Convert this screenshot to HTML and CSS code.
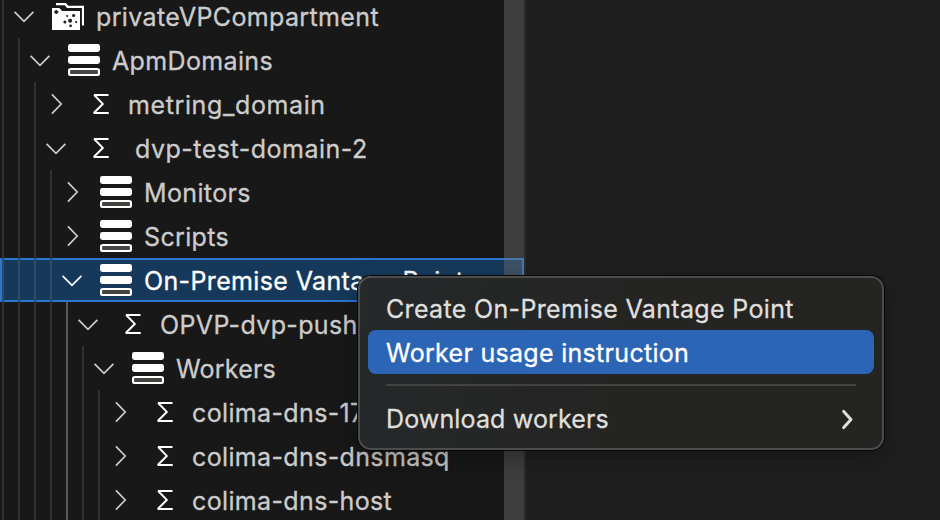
FILE: index.html
```html
<!DOCTYPE html>
<html lang="en">
<head>
<meta charset="utf-8">
<title>Explorer</title>
<link rel="stylesheet" href="styles.css">
</head>
<body>
<svg class="defs" width="0" height="0" aria-hidden="true">
  <symbol id="down" viewBox="0 0 32 32"><path d="M6.6 11.8 16 21.4 25.4 11.8" fill="none" stroke="currentColor" stroke-width="1.7"/></symbol>
  <symbol id="right" viewBox="0 0 32 32"><path d="M11.9 6.4 21.2 16 11.9 25.6" fill="none" stroke="currentColor" stroke-width="1.7"/></symbol>
  <symbol id="stack" viewBox="0 0 32 32"><rect width="32" height="8" rx="2.4" fill="#fff"/><rect y="12" width="32" height="8" rx="2.4" fill="#fff"/><rect x="1" y="25" width="30" height="6" rx="1.8" fill="#434540" stroke="#fff" stroke-width="2.2"/></symbol>
  <symbol id="sigma" viewBox="0 0 32 32"><path d="M24.5 7H10.2L18.8 15.9 9.8 25H24.8" fill="none" stroke="#fff" stroke-width="2" stroke-miterlimit="2"/></symbol>
  <symbol id="folder" viewBox="0 0 32 32"><path d="M0 8H7.5L10 11H28V30H0Z" fill="#fff"/><path d="M4 4.2H13.4L15.6 6.8H31V25.5" fill="none" stroke="#fff" stroke-width="2.2"/><path d="M2.3 12H6.3M4.3 10V14" stroke="#282828" stroke-width="2"/><g fill="#202020"><circle cx="18.1" cy="20.8" r="2"/><circle cx="21.6" cy="15.5" r="1.6"/><circle cx="15.2" cy="16" r="1.1"/><circle cx="12.9" cy="22" r="1.5"/><circle cx="18.6" cy="25.8" r="1.4"/><circle cx="24.1" cy="22.1" r="1.1"/></g></symbol>
</svg>
<div class="window">
  <aside class="sidebar">
    <div class="row"><i class="guide"></i><svg class="twistie"><use href="#down"/></svg><svg class="icon"><use href="#folder"/></svg><span class="label">privateVPCompartment</span></div>
    <div class="row"><i class="guide"></i><i class="guide"></i><svg class="twistie"><use href="#down"/></svg><svg class="icon"><use href="#stack"/></svg><span class="label">ApmDomains</span></div>
    <div class="row"><i class="guide"></i><i class="guide"></i><i class="guide"></i><svg class="twistie"><use href="#right"/></svg><svg class="icon"><use href="#sigma"/></svg><span class="label metring">metring_domain</span></div>
    <div class="row"><i class="guide"></i><i class="guide"></i><i class="guide"></i><svg class="twistie"><use href="#down"/></svg><svg class="icon"><use href="#sigma"/></svg><span class="label dvp">dvp-test-domain-2</span></div>
    <div class="row"><i class="guide"></i><i class="guide"></i><i class="guide"></i><i class="guide"></i><svg class="twistie"><use href="#right"/></svg><svg class="icon"><use href="#stack"/></svg><span class="label">Monitors</span></div>
    <div class="row"><i class="guide"></i><i class="guide"></i><i class="guide"></i><i class="guide"></i><svg class="twistie"><use href="#right"/></svg><svg class="icon"><use href="#stack"/></svg><span class="label">Scripts</span></div>
    <div class="row selected"><i class="guide"></i><i class="guide"></i><i class="guide"></i><i class="guide"></i><svg class="twistie"><use href="#down"/></svg><svg class="icon"><use href="#stack"/></svg><span class="label">On-Premise Vantage Points</span></div>
    <div class="row"><i class="guide"></i><i class="guide"></i><i class="guide"></i><i class="guide"></i><i class="guide active"></i><svg class="twistie"><use href="#down"/></svg><svg class="icon"><use href="#sigma"/></svg><span class="label">OPVP-dvp-push</span></div>
    <div class="row"><i class="guide"></i><i class="guide"></i><i class="guide"></i><i class="guide"></i><i class="guide active"></i><i class="guide"></i><svg class="twistie"><use href="#down"/></svg><svg class="icon"><use href="#stack"/></svg><span class="label workers">Workers</span></div>
    <div class="row"><i class="guide"></i><i class="guide"></i><i class="guide"></i><i class="guide"></i><i class="guide active"></i><i class="guide"></i><i class="guide"></i><svg class="twistie"><use href="#right"/></svg><svg class="icon"><use href="#sigma"/></svg><span class="label">colima-dns-17</span></div>
    <div class="row"><i class="guide"></i><i class="guide"></i><i class="guide"></i><i class="guide"></i><i class="guide active"></i><i class="guide"></i><i class="guide"></i><svg class="twistie"><use href="#right"/></svg><svg class="icon"><use href="#sigma"/></svg><span class="label">colima-dns-dnsmasq</span></div>
    <div class="row"><i class="guide"></i><i class="guide"></i><i class="guide"></i><i class="guide"></i><i class="guide active"></i><i class="guide"></i><i class="guide"></i><svg class="twistie"><use href="#right"/></svg><svg class="icon"><use href="#sigma"/></svg><span class="label">colima-dns-host</span></div>
    <div class="scrollbar"></div>
  </aside>
  <main class="editor"></main>
  <div class="menu">
    <div class="item"><span class="create">Create On-Premise Vantage Point</span></div>
    <div class="item hover"><span class="usage">Worker usage instruction</span></div>
    <div class="separator"></div>
    <div class="item"><span class="download">Download workers</span><svg class="more" viewBox="0 0 14 22"><path d="M2.7 3.4 10 11.5 2.7 19.6" fill="none" stroke="currentColor" stroke-width="3" stroke-linecap="round" stroke-linejoin="round"/></svg></div>
  </div>
</div>
</body>
</html>
```
FILE: styles.css
```css
* { box-sizing: border-box; }
body { margin: 0; background: #1f1f1f; font-family: Inter, "Liberation Sans", sans-serif; font-size: 25px; letter-spacing: .36px; -webkit-text-stroke: .3px currentColor; }
.defs { display: none; }
.window { position: relative; display: flex; width: 940px; height: 520px; overflow: hidden; }
.sidebar { position: relative; width: 526px; height: 532px; margin-top: -6px; flex: none; background: #181818; border-right: 2px solid #2b2b2b; color: #ccc; }
.editor { flex: 1; background: #1f1f1f; }
.row { display: flex; align-items: center; height: 44px; overflow: hidden; white-space: nowrap; }
.guide { flex: none; width: 16px; height: 44px; padding-left: 2px; }
.guide::before { content: ""; display: block; width: 2px; height: 44px; background: #303030; }
.guide.active::before { background: #585858; }
.selected { color: #fff; background: #16395b; box-shadow: inset 0 0 0 2px #2a76d2; }
.selected .guide::before { background: #324b64; }
.twistie { flex: none; width: 32px; height: 32px; margin-left: -8px; }
.icon { flex: none; width: 32px; height: 32px; margin: 0 12px; }
.label { padding-top: 2px; line-height: 44px; }
.metring { letter-spacing: .62px; }
.dvp { margin-left: 7px; letter-spacing: .5px; }
.workers { letter-spacing: .22px; }
.scrollbar { position: absolute; top: 0; right: 0; width: 20px; height: 100%; background: rgba(121, 121, 121, .4); }
.menu { position: absolute; left: 358px; top: 276px; width: 526px; height: 174px; padding: 8px; border: 2px solid #4b4d4c; border-radius: 13px; background: linear-gradient(100deg, #25292a 0, #252626 30%, #242422 55%); box-shadow: 0 0 0 1px #080808, 0 8px 26px rgba(0, 0, 0, .32); color: #dfdfdd; }
.item { display: flex; align-items: center; justify-content: space-between; height: 44px; padding: 2px 19px 0 18px; border-radius: 8px; line-height: 42px; white-space: nowrap; }
.create { letter-spacing: .34px; }
.usage { letter-spacing: .3px; }
.download { letter-spacing: .14px; }
.hover { color: #fff; background: #2c65b6; }
.separator { height: 2px; margin: 10px 18px; background: #424341; }
.more { width: 14px; height: 22px; }
```
